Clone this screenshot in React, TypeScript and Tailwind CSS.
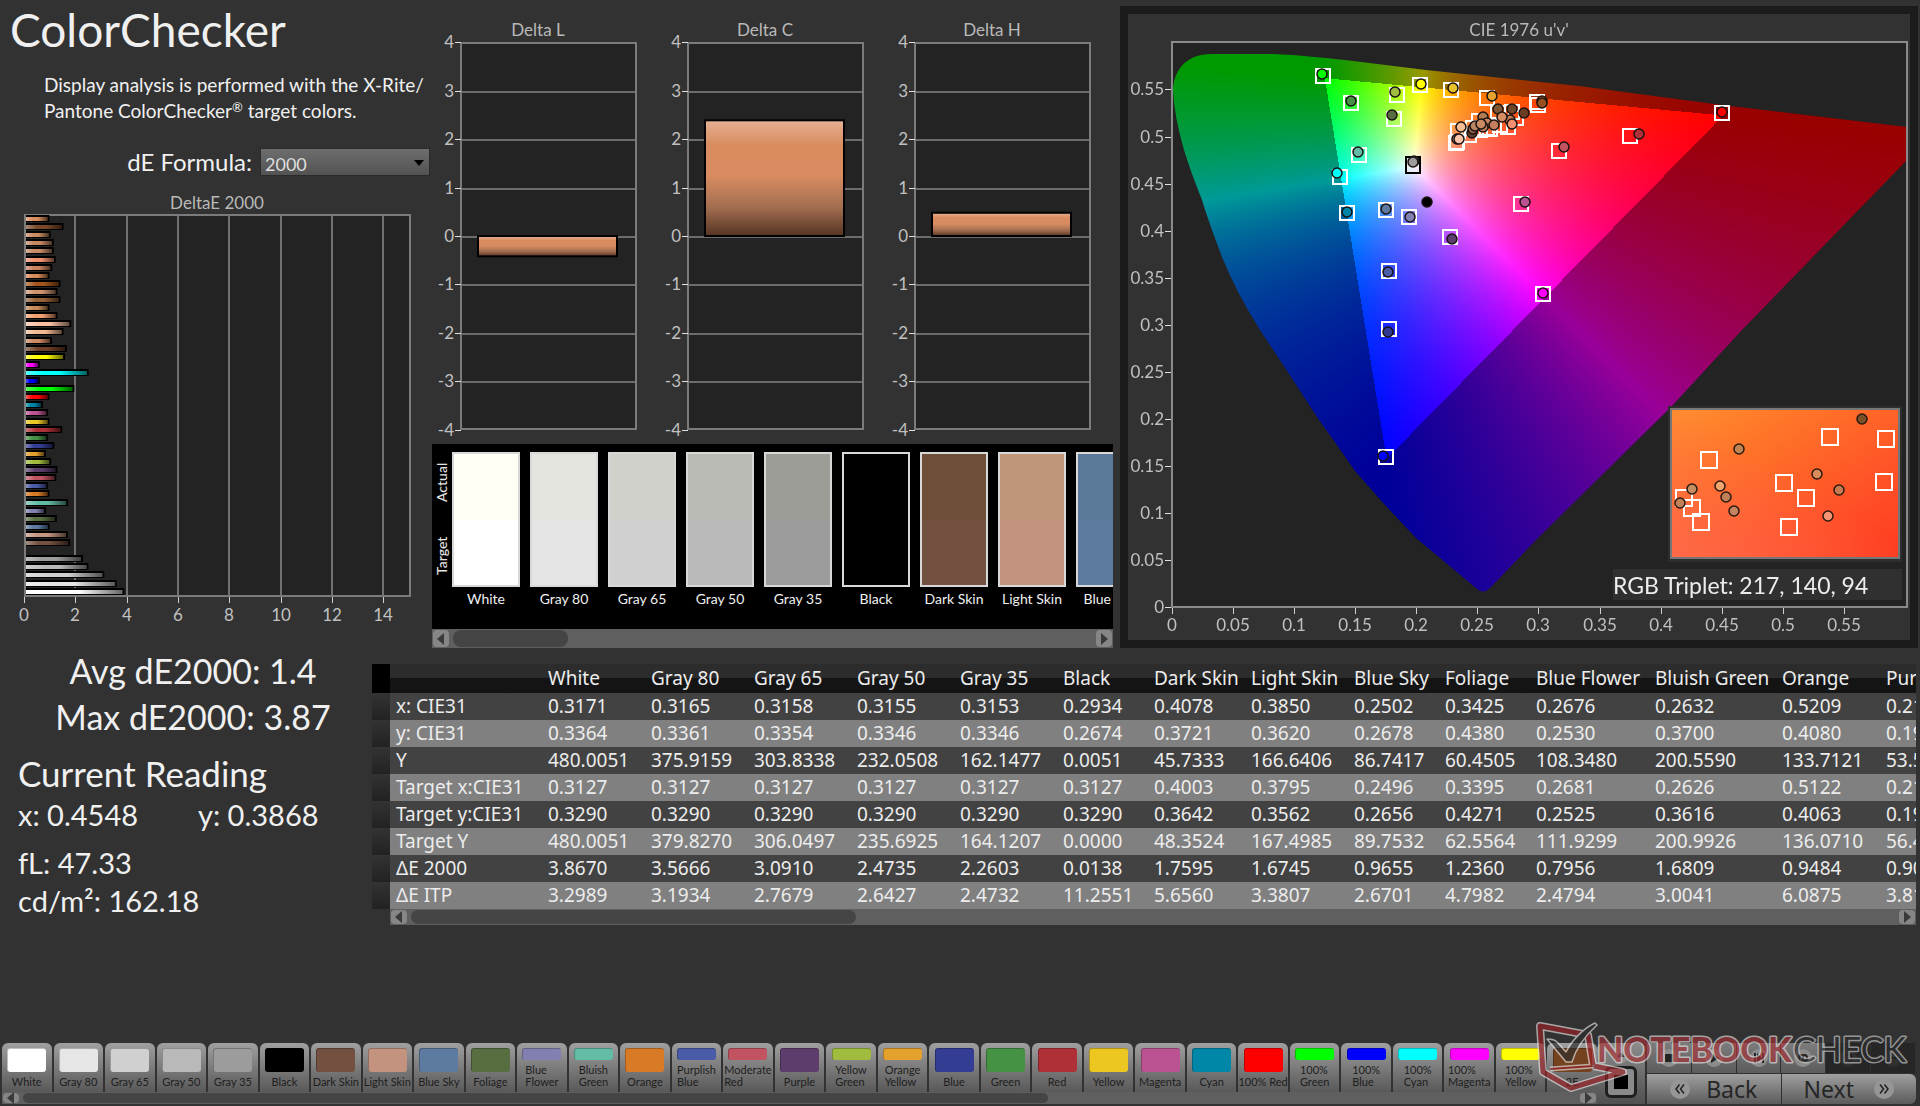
import React, { useLayoutEffect, useRef } from "react";

/* ---------- data ---------- */

const deltaBars: [number, string][] = [
  [0.95, "#d98c5e"], [1.5, "#7a4a28"], [1.0, "#c98b62"], [1.12, "#c48760"], [1.12, "#c58a66"],
  [1.2, "#f0906f"], [1.06, "#c98260"], [0.95, "#d98a5a"], [1.38, "#a5561e"], [1.26, "#cf9470"],
  [1.38, "#946035"], [0.95, "#c48a58"], [1.26, "#f2a070"], [1.8, "#f9c0a4"], [1.5, "#f2ba92"],
  [1.05, "#cc8862"], [1.63, "#70402a"], [1.56, "#ffff00"], [0.58, "#ff00ff"], [2.48, "#00ffff"],
  [0.58, "#0000ff"], [1.92, "#00ff00"], [0.95, "#ff0000"], [0.7, "#0087a8"], [0.9, "#bb5392"],
  [0.95, "#eac723"], [1.45, "#b03038"], [0.9, "#469245"], [1.14, "#333d94"], [0.82, "#e5a12d"],
  [1.02, "#9fbc3f"], [1.26, "#5b3d6b"], [1.22, "#c25462"], [0.9, "#4a5ba7"], [0.95, "#d87a26"],
  [1.68, "#62bca6"], [0.82, "#8280b1"], [1.24, "#586e41"], [0.96, "#5c7aa0"], [1.67, "#c49580"],
  [1.76, "#735040"], [0, "#000000"], [2.26, "#9c9c9c"], [2.47, "#b9b9b9"], [3.09, "#d0d0d0"],
  [3.57, "#e6e6e6"], [3.87, "#ffffff"],
];

const swatches: [string, string, string][] = [
  ["White", "#fffff5", "#ffffff"],
  ["Gray 80", "#e4e5df", "#e5e5e5"],
  ["Gray 65", "#d0d1ca", "#d0d0d0"],
  ["Gray 50", "#b9bab4", "#b9b9b9"],
  ["Gray 35", "#9c9d97", "#9c9c9c"],
  ["Black", "#000000", "#000000"],
  ["Dark Skin", "#704f3a", "#735040"],
  ["Light Skin", "#c1957a", "#c39380"],
  ["Blue Sky", "#5b7998", "#5d7aa0"],
];

const patches: [string, string][] = [
  ["White", "#ffffff"], ["Gray 80", "#e6e6e6"], ["Gray 65", "#d0d0d0"], ["Gray 50", "#b9b9b9"],
  ["Gray 35", "#9c9c9c"], ["Black", "#000000"], ["Dark Skin", "#735040"], ["Light Skin", "#c39380"],
  ["Blue Sky", "#5d7aa0"], ["Foliage", "#586e41"], ["Blue\nFlower", "#8280b1"], ["Bluish\nGreen", "#62bca6"],
  ["Orange", "#d87a26"], ["Purplish\nBlue", "#4a5ba7"], ["Moderate\nRed", "#c25462"], ["Purple", "#5e3c6c"],
  ["Yellow\nGreen", "#9fbc3f"], ["Orange\nYellow", "#e5a12d"], ["Blue", "#333d94"], ["Green", "#469245"],
  ["Red", "#b03038"], ["Yellow", "#ecc722"], ["Magenta", "#bb5392"], ["Cyan", "#0087a8"],
  ["100% Red", "#ff0000"], ["100%\nGreen", "#00ff00"], ["100%\nBlue", "#0000ff"], ["100%\nCyan", "#00ffff"],
  ["100%\nMagenta", "#ff00ff"], ["100%\nYellow", "#ffff00"], ["2E", "#75421f"],
];

const columns = [
  "White", "Gray 80", "Gray 65", "Gray 50", "Gray 35", "Black", "Dark Skin", "Light Skin",
  "Blue Sky", "Foliage", "Blue Flower", "Bluish Green", "Orange", "Purplish Blue",
];

const rows: [string, string[]][] = [
  ["x: CIE31", ["0.3171", "0.3165", "0.3158", "0.3155", "0.3153", "0.2934", "0.4078", "0.3850", "0.2502", "0.3425", "0.2676", "0.2632", "0.5209", "0.2135"]],
  ["y: CIE31", ["0.3364", "0.3361", "0.3354", "0.3346", "0.3346", "0.2674", "0.3721", "0.3620", "0.2678", "0.4380", "0.2530", "0.3700", "0.4080", "0.1902"]],
  ["Y", ["480.0051", "375.9159", "303.8338", "232.0508", "162.1477", "0.0051", "45.7333", "166.6406", "86.7417", "60.4505", "108.3480", "200.5590", "133.7121", "53.5120"]],
  ["Target x:CIE31", ["0.3127", "0.3127", "0.3127", "0.3127", "0.3127", "0.3127", "0.4003", "0.3795", "0.2496", "0.3395", "0.2681", "0.2626", "0.5122", "0.2150"]],
  ["Target y:CIE31", ["0.3290", "0.3290", "0.3290", "0.3290", "0.3290", "0.3290", "0.3642", "0.3562", "0.2656", "0.4271", "0.2525", "0.3616", "0.4063", "0.1906"]],
  ["Target Y", ["480.0051", "379.8270", "306.0497", "235.6925", "164.1207", "0.0000", "48.3524", "167.4985", "89.7532", "62.5564", "111.9299", "200.9926", "136.0710", "56.4310"]],
  ["ΔE 2000", ["3.8670", "3.5666", "3.0910", "2.4735", "2.2603", "0.0138", "1.7595", "1.6745", "0.9655", "1.2360", "0.7956", "1.6809", "0.9484", "0.9012"]],
  ["ΔE ITP", ["3.2989", "3.1934", "2.7679", "2.6427", "2.4732", "11.2551", "5.6560", "3.3807", "2.6701", "4.7982", "2.4794", "3.0041", "6.0875", "3.8140"]],
];

const targets: [number, number][] = [
  [1323, 76], [1420, 85], [1451, 90], [1487, 98], [1537, 102], [1538, 105], [1397, 95], [1351, 103],
  [1394, 119], [1359, 155], [1340, 177], [1347, 213], [1386, 210], [1409, 217], [1450, 237],
  [1389, 271], [1389, 329], [1543, 294], [1521, 204], [1559, 151], [1630, 136], [1722, 113],
  [1386, 457], [1498, 113], [1512, 112], [1479, 121], [1458, 131], [1457, 142], [1456, 143],
  [1469, 135], [1480, 130], [1487, 128], [1490, 129], [1508, 127], [1516, 118], [1473, 128], [1500, 125],
];

const readings: [number, number, string][] = [
  [1322, 74, "#00ff00"], [1421, 84, "#ffff00"], [1453, 88, "#e8c22a"], [1395, 92, "#9fbc3f"],
  [1351, 101, "#469245"], [1392, 115, "#586e41"], [1358, 152, "#62bca6"], [1337, 173, "#00ffff"],
  [1347, 212, "#0085a8"], [1386, 209, "#5c7aa0"], [1410, 217, "#8280b1"], [1427, 202, "#000000"],
  [1452, 239, "#5b3d6b"], [1388, 272, "#4a5ba7"], [1388, 332, "#313a93"], [1543, 293, "#ff00ff"],
  [1525, 202, "#bb5392"], [1564, 147, "#c25462"], [1639, 134, "#b03038"], [1722, 112, "#ff0000"],
  [1383, 456, "#0000ff"], [1492, 96, "#e5a12d"], [1542, 101, "#d87a26"], [1542, 103, "#94501f"],
  [1498, 109, "#7e5533"], [1512, 109, "#6e4527"], [1524, 113, "#6b3d22"], [1483, 117, "#b07d50"],
  [1510, 120, "#c07a55"], [1502, 117, "#d48c60"], [1512, 124, "#f4906f"], [1487, 123, "#c88860"],
  [1494, 125, "#c4805e"], [1483, 127, "#c08060"], [1472, 133, "#5d4030"], [1473, 129, "#8d6244"],
  [1475, 126, "#b98562"], [1481, 124, "#c98b64"], [1461, 127, "#f7bd93"], [1457, 139, "#c49580"],
  [1459, 139, "#fbc3a8"],
];

const insetTargets: [number, number][] = [
  [1830, 437], [1886, 439], [1709, 460], [1784, 483], [1806, 498], [1884, 482],
  [1684, 498], [1692, 508], [1701, 522], [1789, 527],
];

const insetReadings: [number, number, string][] = [
  [1862, 419, "#7b4f28"], [1739, 449, "#c08552"], [1692, 489, "#c48e60"], [1680, 503, "#c08058"],
  [1720, 486, "#f0a46e"], [1726, 497, "#c07f58"], [1734, 511, "#c5835f"], [1817, 474, "#d78c5a"],
  [1839, 490, "#c77b52"], [1828, 516, "#f59372"],
];

/* ---------- DeltaE bar chart ---------- */

function DeltaEChart() {
  const ox = 24;
  const unit = 25.65;
  return (
    <svg viewBox="0 176 430 472" className="block w-full" role="img" aria-label="DeltaE 2000 by patch">
      <defs>
        <linearGradient id="barShade" x1="0" x2="1" y1="0" y2="0">
          <stop offset="0" stopColor="#fff" stopOpacity="0.35" />
          <stop offset="0.3" stopColor="#fff" stopOpacity="0" />
          <stop offset="0.55" stopColor="#000" stopOpacity="0" />
          <stop offset="1" stopColor="#000" stopOpacity="0.6" />
        </linearGradient>
      </defs>
      <text x="217" y="209" textAnchor="middle" className="fill-[#b9b9b9] text-[17px]">DeltaE 2000</text>
      <rect x="25" y="215" width="385" height="381" fill="#232323" stroke="#7b7b7b" strokeWidth="2" />
      {[0, 2, 4, 6, 8, 10, 12, 14].map((v) => (
        <g key={v}>
          {v > 0 && <rect x={Math.round(ox + v * unit) - 1} y="216" width="2" height="379" fill="#707070" />}
          <rect x={Math.round(ox + v * unit)} y="597" width="1" height="6" fill="#d0d0d0" />
          <text x={Math.round(ox + v * unit)} y="621" textAnchor="middle" className="fill-[#c0c0c0] text-[17px]">{v}</text>
        </g>
      ))}
      {deltaBars.map(([v, c], i) => {
        if (!v) return null;
        const y = Math.round(218 + i * 8.1);
        return (
          <g key={i}>
            <rect x="26" y={y - 3} width={v * unit - 1} height="7" fill="#000" />
            <rect x="26" y={y - 1} width={v * unit - 3} height="4" fill={c} />
            <rect x="26" y={y - 1} width={v * unit - 3} height="4" fill="url(#barShade)" />
          </g>
        );
      })}
    </svg>
  );
}

/* ---------- Delta L / C / H ---------- */

function DeltaChart({ title, value }: { title: string; value: number }) {
  const zero = 236;
  const step = 48.4;
  const y = value > 0 ? zero - value * step : zero;
  return (
    <svg viewBox="0 0 227 444" className="block w-full" role="img" aria-label={title}>
      <defs>
        <linearGradient id="skin" x1="0" x2="0" y1="0" y2="1">
          <stop offset="0" stopColor="#e6b095" />
          <stop offset="0.22" stopColor="#d98c5e" />
          <stop offset="0.48" stopColor="#d88c60" />
          <stop offset="0.75" stopColor="#a36e50" />
          <stop offset="1" stopColor="#553423" />
        </linearGradient>
      </defs>
      <text x="106" y="36" textAnchor="middle" className="fill-[#b9b9b9] text-[17px]">{title}</text>
      <rect x="29" y="43" width="175" height="386" fill="#232323" stroke="#7b7b7b" strokeWidth="2" />
      {[4, 3, 2, 1, 0, -1, -2, -3, -4].map((v) => {
        const ty = Math.round(zero - v * step);
        return (
          <g key={v}>
            {Math.abs(v) < 4 && <rect x="30" y={ty} width="173" height="2" fill="#6c6c6c" />}
            <rect x="23" y={ty} width="6" height="1" fill="#e0e0e0" />
            <text x="22" y={ty + 6} textAnchor="end" className="fill-[#c0c0c0] text-[17px]">{v}</text>
          </g>
        );
      })}
      <rect x="46" y={y} width="139" height={Math.abs(value) * step} fill="url(#skin)" stroke="#000" strokeWidth="2" />
    </svg>
  );
}

/* ---------- scroll bar ---------- */

function ScrollBar({ thumb, height }: { thumb: string; height: string }) {
  return (
    <div className={`flex items-center bg-[#5f5f5f] p-px ${height}`}>
      <button aria-label="Scroll left" className="flex h-full w-4 shrink-0 items-center justify-center rounded-sm bg-[#868686]">
        <svg viewBox="0 0 8 12" className="h-3 w-2"><path d="M7 0v12L0 6z" fill="#3a3a3a" /></svg>
      </button>
      <div className="mx-1 h-full min-w-0 flex-1">
        <div className={`h-full rounded-lg bg-[#454545] ${thumb}`} />
      </div>
      <button aria-label="Scroll right" className="flex h-full w-4 shrink-0 items-center justify-center rounded-sm bg-[#868686]">
        <svg viewBox="0 0 8 12" className="h-3 w-2"><path d="M1 0v12l7-6z" fill="#3a3a3a" /></svg>
      </button>
    </div>
  );
}

/* ---------- actual / target strip ---------- */

function SwatchStrip() {
  return (
    <div className="overflow-hidden bg-black">
      <div className="flex h-[185px] pt-2">
        <div className="flex w-5 shrink-0 flex-col text-sm font-medium text-[#e4e4e4]">
          <span className="flex h-[60px] w-5 rotate-180 items-center justify-center [writing-mode:vertical-rl]">Actual</span>
          <span className="mt-3.5 flex h-[60px] w-5 rotate-180 items-center justify-center [writing-mode:vertical-rl]">Target</span>
        </div>
        <div className="flex min-w-0 flex-1 gap-2.5 overflow-hidden">
          {swatches.map(([name, actual, target]) => (
            <figure key={name} className="w-[68px] shrink-0 text-center">
              <div className="flex h-[135px] flex-col border-2 border-[#d8d8d8]">
                <div className="flex-1" style={{ background: actual }} />
                <div className="flex-1" style={{ background: target }} />
              </div>
              <figcaption className="mt-0.5 text-sm leading-5 whitespace-nowrap text-[#f0f0f0]">{name}</figcaption>
            </figure>
          ))}
        </div>
      </div>
      <ScrollBar thumb="w-[18%]" height="h-[19px]" />
    </div>
  );
}

/* ---------- CIE 1976 u'v' ---------- */

const VX = 1128;
const VY = 14;
const VW = 782;
const VH = 626;

const locus =
  "M1173 90 C1174 72 1184 54 1212 54 L1273 54 C1300 55 1324 58 1345 60 L1426 70 L1579 86 L1722 105 L1907 127 L1907 160 " +
  "L1742 330 L1671 407 L1538 538 L1490 588 Q1483 595 1476 588 L1416 538 Q1384 505 1355 471 Q1330 435 1319 420 " +
  "Q1288 372 1260 330 Q1236 292 1222 257 Q1208 220 1202 200 Q1190 170 1184 150 Q1174 115 1173 90 Z";

function paintGamut(canvas: HTMLCanvasElement) {
  const ctx = canvas.getContext("2d");
  if (!ctx) return;
  const off = document.createElement("canvas");
  off.width = VW;
  off.height = VH;
  const octx = off.getContext("2d")!;
  const img = octx.createImageData(VW, VH);
  for (let j = 0; j < VH; j++) {
    for (let i = 0; i < VW; i++) {
      const u = (i + VX - 1171.5) / 1223;
      const v = Math.max((607 - j - VY) / 941, 0.003);
      const X = (9 * u) / (4 * v);
      const Z = (12 - 3 * u - 20 * v) / (4 * v);
      const r = 3.2406 * X - 1.5372 - 0.4986 * Z;
      const g = -0.9689 * X + 1.8758 + 0.0415 * Z;
      const b = 0.0557 * X - 0.204 + 1.057 * Z;
      const inside = r >= 0 && g >= 0 && b >= 0;
      const m = Math.max(r, g, b);
      const k = inside ? 255 : 153;
      const o = (j * VW + i) * 4;
      img.data[o] = (k * Math.max(r, 0)) / m;
      img.data[o + 1] = (k * Math.max(g, 0)) / m;
      img.data[o + 2] = (k * Math.max(b, 0)) / m;
      img.data[o + 3] = 255;
    }
  }
  octx.putImageData(img, 0, 0);
  ctx.clearRect(0, 0, VW, VH);
  ctx.save();
  ctx.translate(-VX, -VY);
  ctx.fillStyle = "#232323";
  ctx.fillRect(1172, 42, 735, 565);
  ctx.clip(new Path2D(locus));
  ctx.drawImage(off, VX, VY);
  ctx.restore();
}

function CieChart() {
  const ref = useRef<HTMLCanvasElement>(null);
  useLayoutEffect(() => {
    if (ref.current) paintGamut(ref.current);
  }, []);
  const ticks = Array.from({ length: 12 }, (_, i) => i * 0.05);
  const label = (v: number) => String(Number(v.toFixed(2)));
  return (
    <div className="relative border-8 border-[#1b1b1b] bg-[#323232]">
      <canvas ref={ref} width={VW} height={VH} className="absolute inset-0 h-full w-full" />
      <svg viewBox="1128 14 782 626" className="relative block w-full" role="img" aria-label="CIE 1976 chromaticity diagram">
        <defs>
          <linearGradient id="inset" x1="0" y1="0" x2="1" y2="1">
            <stop offset="0" stopColor="#ff8f30" />
            <stop offset="0.3" stopColor="#ff7428" />
            <stop offset="0.65" stopColor="#ff5528" />
            <stop offset="1" stopColor="#ff3a20" />
          </linearGradient>
          <linearGradient id="insetPink" x1="1" y1="0" x2="0" y2="1">
            <stop offset="0.45" stopColor="#ff6a50" stopOpacity="0" />
            <stop offset="1" stopColor="#ff6a50" stopOpacity="0.8" />
          </linearGradient>
        </defs>
        <text x="1519" y="36" textAnchor="middle" className="fill-[#b9b9b9] text-[17px]">CIE 1976 u'v'</text>
        <rect x="1172" y="42" width="735" height="565" fill="none" stroke="#8a8a8a" strokeWidth="2" />
        {ticks.map((t) => {
          const x = Math.round(1171.5 + t * 1223);
          const y = Math.round(607 - t * 941);
          return (
            <g key={t}>
              <rect x={x} y="608" width="1" height="6" fill="#d0d0d0" />
              <text x={x} y="631" textAnchor="middle" className="fill-[#c0c0c0] text-[17px]">{label(t)}</text>
              <rect x="1165" y={y} width="6" height="1" fill="#e0e0e0" />
              <text x="1164" y={y + 6} textAnchor="end" className="fill-[#c0c0c0] text-[17px]">{label(t)}</text>
            </g>
          );
        })}
        <g fill="none" stroke="#fff" strokeWidth="2">
          {targets.map(([x, y], i) => (
            <rect key={i} x={x - 7} y={y - 7} width="14" height="14" />
          ))}
        </g>
        <rect x="1406" y="157" width="14" height="16" fill="#e8e8f4" fillOpacity="0.6" stroke="#000" strokeWidth="2" />
        <g stroke="#1a1210" strokeWidth="1.5">
          <circle cx="1414" cy="161" r="5" fill="#c0c0c0" />
          <circle cx="1413" cy="162" r="5" fill="#9c9c9c" />
          {readings.map(([x, y, c], i) => (
            <circle key={i} cx={x} cy={y} r="5" fill={c} />
          ))}
        </g>

        <rect x="1668" y="406" width="234" height="156" fill="#2d2d2d" />
        <rect x="1671" y="409" width="228" height="149" fill="url(#inset)" />
        <rect x="1671" y="409" width="228" height="149" fill="url(#insetPink)" stroke="#777" strokeWidth="2" />
        <g fill="none" stroke="#fff" strokeWidth="2">
          {insetTargets.map(([x, y], i) => (
            <rect key={i} x={x - 8} y={y - 8} width="16" height="16" />
          ))}
        </g>
        <g stroke="#2a1a10" strokeWidth="1.5">
          {insetReadings.map(([x, y, c], i) => (
            <circle key={i} cx={x} cy={y} r="5" fill={c} />
          ))}
        </g>
        <rect x="1613" y="569" width="289" height="31" fill="#303030" />
        <text x="1613" y="594" className="fill-[#ededed] text-[23px]">RGB Triplet: 217, 140, 94</text>
      </svg>
    </div>
  );
}

/* ---------- readings table ---------- */

function ReadingsTable() {
  return (
    <div className="mt-4 mr-1 min-w-0 overflow-hidden font-['Noto_Sans',sans-serif]">
      <table className="w-[1646px] table-fixed border-collapse text-left text-[19px] leading-none whitespace-nowrap text-[#ececec]">
        <colgroup>
          <col className="w-[18px]" />
          <col className="w-[152px]" />
          <col className="w-[103px]" />
          <col className="w-[103px]" />
          <col className="w-[103px]" />
          <col className="w-[103px]" />
          <col className="w-[103px]" />
          <col className="w-[91px]" />
          <col className="w-[97px]" />
          <col className="w-[103px]" />
          <col className="w-[91px]" />
          <col className="w-[91px]" />
          <col className="w-[119px]" />
          <col className="w-[127px]" />
          <col className="w-[104px]" />
          <col className="w-[138px]" />
        </colgroup>
        <thead>
          <tr className="h-[29px] bg-linear-to-b from-[#2c2c2c] from-50% to-[#141414] to-50%">
            <td className="bg-black" />
            <td />
            {columns.map((c) => (
              <th key={c} scope="col" className="pl-1.5 font-normal">{c}</th>
            ))}
          </tr>
        </thead>
        <tbody>
          {rows.map(([name, values]) => (
            <tr key={name} className="h-[27px] bg-[#424242] even:bg-[#808080]">
              <td className="bg-linear-to-b from-[#333] to-[#222]" />
              <th scope="row" className="pl-1.5 font-normal">{name}</th>
              {values.map((v, i) => (
                <td key={i} className="pl-1.5">{v}</td>
              ))}
            </tr>
          ))}
        </tbody>
      </table>
      <div className="ml-[18px]">
        <ScrollBar thumb="w-[30%]" height="h-4" />
      </div>
    </div>
  );
}

/* ---------- bottom bar ---------- */

function PatchButton({ name, color }: { name: string; color: string }) {
  const two = name.includes("\n");
  return (
    <button className="flex h-[49px] min-w-0 flex-1 flex-col items-center justify-between overflow-hidden rounded-t-md bg-linear-to-b from-[#a0a0a0] to-[#595959] pt-[5px] pb-1 text-[11px] leading-3 text-[#1e1e1e]">
      <span
        className={`w-[39px] rounded-[3px] border-t border-l border-black/25 ${two ? "h-3" : "h-6"}`}
        style={{ background: color }}
      />
      <span className="text-left whitespace-pre">{name}</span>
    </button>
  );
}

const transport = [
  <path key="s" d="M6 6h8v8H6z" />,
  <path key="p" d="M7 5l8 5-8 5z" />,
  <path key="n" d="M5 5h2v10H5zM8 5l5 5-5 5zM13 5h2v10h-2z" />,
  <path key="l" d="M6 10c0-4 5-4 4 0s4 4 4 0-5-4-4 0-4 4-4 0z" fill="none" stroke="#222" strokeWidth="2" />,
  <path key="r" d="M6 10a4 4 0 1 1 4 4" fill="none" stroke="#222" strokeWidth="2" />,
  <path key="e" d="M6 10h8" fill="none" stroke="#222" strokeWidth="2" />,
];

function Watermark() {
  return (
    <svg viewBox="0 0 390 80" className="pointer-events-none absolute right-0 bottom-2.5 w-[390px]" role="img" aria-label="Notebookcheck">
      <g opacity="0.66" strokeLinejoin="round">
        <g fill="none" stroke="#e4e4e4">
          <path d="M63 49 L58 19 L10 10 L13 56 L41 72 L93 56 L64 50" strokeWidth="8" />
          <path d="M20 53 L63 50" strokeWidth="5" />
        </g>
        <g fill="none" stroke="#9c2226">
          <path d="M63 49 L58 19 L10 10 L13 56 L41 72 L93 56 L64 50" strokeWidth="5" />
          <path d="M20 53 L63 50" strokeWidth="2" />
        </g>
        <path d="M17 23 C22 23 25 24 27 26 L36 36 C42 24 54 12 65 7 L67 9 C57 18 46 32 42 46 L36 46 Z" fill="#2c2c2c" stroke="#e4e4e4" strokeWidth="1.5" />
        <text x="67" y="46" paintOrder="stroke" fill="#a83237" stroke="#e0e0e0" strokeWidth="3" className="text-[34px] font-black">NOTEBOOK</text>
        <text x="263" y="46" paintOrder="stroke" fill="#2f2f2f" stroke="#c8c8c8" strokeWidth="3" className="text-[34px]">CHECK</text>
      </g>
    </svg>
  );
}

function BottomBar() {
  return (
    <div className="relative mt-auto flex h-[63px] pr-1 pb-0.5">
      <div className="min-w-0 flex-1 pl-0.5">
        <div className="flex gap-0.5">
          {patches.map(([name, color]) => (
            <PatchButton key={name} name={name} color={color} />
          ))}
        </div>
        <ScrollBar thumb="w-[66%]" height="h-3" />
      </div>
      <div className="flex w-[48px] flex-col items-center justify-between rounded-t-md bg-linear-to-b from-[#8c8c8c] to-[#505050] pb-1.5">
        <svg viewBox="0 0 20 20" className="mt-0.5 h-5 w-5"><circle cx="10" cy="10" r="8" fill="#8f8f8f" /><path d="M6 12l4-5 4 5z" fill="#333" /></svg>
        <button aria-label="Stop" className="flex h-8 w-8 items-center justify-center rounded-md border-3 border-[#1e1e1e] bg-[#8a8a8a]">
          <span className="h-3.5 w-3.5 bg-black" />
        </button>
      </div>
      <div className="ml-0.5 w-[269px]">
        <div className="grid h-[30px] grid-cols-6">
          {transport.map((icon, i) => (
            <button
              key={i}
              aria-label={["Stop", "Play", "Step", "Loop", "Repeat", "Range"][i]}
              className={`flex items-center justify-center border-r border-[#303030] ${i < 4 ? "bg-linear-to-b from-[#7c7c7c] to-[#5c5c5c]" : "bg-[#262626]"}`}
            >
              <svg viewBox="0 0 20 20" className="h-5 w-5">
                <circle cx="10" cy="10" r="9" fill={i < 4 ? "#8c8c8c" : "#303030"} />
                <g fill="#222">{icon}</g>
              </svg>
            </button>
          ))}
        </div>
        <div className="mt-px grid h-[30px] grid-cols-2 font-['Noto_Sans',sans-serif] text-[23px] leading-none text-[#262626]">
          <button className="flex items-center justify-center gap-4 border-r border-[#303030] bg-linear-to-b from-[#a0a0a0] to-[#5c5c5c]">
            <svg viewBox="0 0 20 20" className="h-5 w-5"><circle cx="10" cy="10" r="10" fill="#969696" /><path d="M9.500 5.500L6 10l3.500 4.500M14 5.500L10.500 10l3.500 4.500" fill="none" stroke="#222" strokeWidth="1.500" /></svg>
            Back
          </button>
          <button className="flex items-center justify-center gap-5 rounded-r-md bg-linear-to-b from-[#a0a0a0] to-[#5c5c5c]">
            Next
            <svg viewBox="0 0 20 20" className="h-5 w-5"><circle cx="10" cy="10" r="10" fill="#969696" /><path d="M6 5.500L9.500 10L6 14.500M10.500 5.500L14 10l-3.500 4.500" fill="none" stroke="#222" strokeWidth="1.500" /></svg>
          </button>
        </div>
      </div>
      <Watermark />
    </div>
  );
}

/* ---------- page ---------- */

export default function App() {
  return (
    <div className="flex min-h-screen flex-col overflow-hidden bg-[#323232] font-['Lato',sans-serif] text-[#f0f0f0]">
      <div className="grid grid-cols-[minmax(0,430fr)_minmax(0,690fr)_minmax(0,800fr)] items-start">
        <section>
          <h1 className="pt-0.5 pl-2.5 text-[46px] leading-[56px]">ColorChecker</h1>
          <p className="mt-3.5 pl-11 text-[19px] leading-[26px] whitespace-nowrap">
            Display analysis is performed with the X-Rite/
            <br />
            Pantone ColorChecker<sup className="text-[13px] leading-none">®</sup> target colors.
          </p>
          <div className="mt-6 flex h-7 items-center justify-end gap-2">
            <label htmlFor="formula" className="text-2xl leading-7">dE Formula:</label>
            <span className="relative w-[170px]">
              <select id="formula" className="block h-7 w-full appearance-none border border-[#2a2a2a] bg-linear-to-b from-[#6e6e6e] to-[#525252] pt-1 pl-1 text-lg leading-none text-[#dedede]">
                <option>2000</option>
              </select>
              <svg viewBox="0 0 10 6" className="pointer-events-none absolute top-3 right-1.5 h-1.5 w-2.5"><path d="M0 0h10L5 6z" fill="#000" /></svg>
            </span>
          </div>
          <DeltaEChart />
        </section>

        <section className="pr-[7px] pl-0.5">
          <div className="grid grid-cols-3">
            <DeltaChart title="Delta L" value={-0.42} />
            <DeltaChart title="Delta C" value={2.39} />
            <DeltaChart title="Delta H" value={0.48} />
          </div>
          <SwatchStrip />
        </section>

        <section className="mt-1.5 mr-0.5">
          <CieChart />
        </section>
      </div>

      <div className="grid grid-cols-[372px_minmax(0,1fr)] items-start">
        <section className="pl-[18px]">
          <div className="pr-1 text-center text-[34px] leading-[46px] whitespace-nowrap">
            <p>Avg dE2000: 1.4</p>
            <p>Max dE2000: 3.87</p>
          </div>
          <h2 className="mt-2.5 text-[35px] leading-[46px]">Current Reading</h2>
          <div className="text-[29px] leading-[38px]">
            <p className="flex">
              <span className="w-[180px]">x: 0.4548</span>
              <span>y: 0.3868</span>
            </p>
            <p className="mt-2.5">fL: 47.33</p>
            <p>cd/m²: 162.18</p>
          </div>
        </section>
        <ReadingsTable />
      </div>

      <BottomBar />
    </div>
  );
}
